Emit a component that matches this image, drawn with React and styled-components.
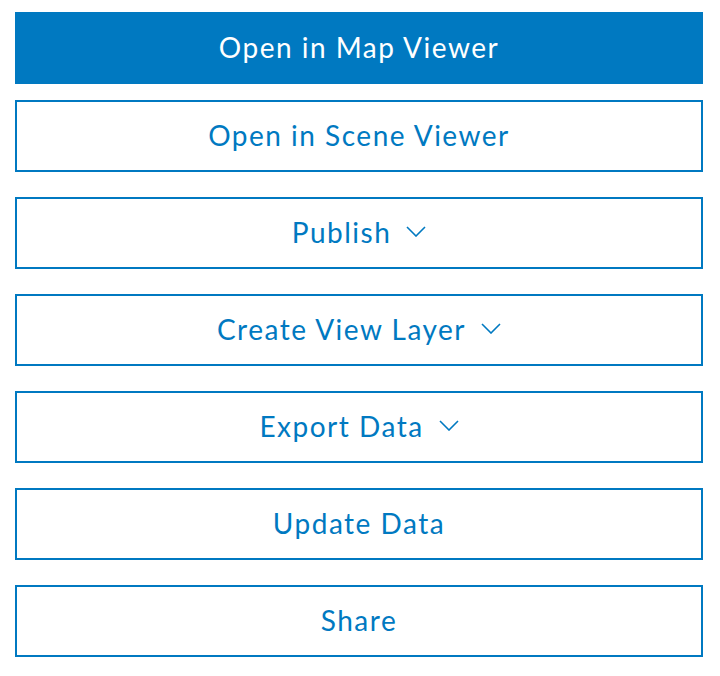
import React from "react";
import styled, { createGlobalStyle } from "styled-components";

const GlobalStyle = createGlobalStyle`
  body {
    margin: 0;
    background: #fff;
    font-family: Lato, "Noto Sans", sans-serif;
  }
`;

const Wrap = styled.div`
  display: flex;
  flex-direction: column;
  padding: 12px 17px 0 15px;
  gap: 25px;
`;

const Group = styled.div`
  display: flex;
  flex-direction: column;
  gap: 16px;
`;

const Btn = styled.button`
  display: flex;
  align-items: center;
  justify-content: center;
  gap: 15px;
  height: 72px;
  width: 100%;
  box-sizing: border-box;
  border: 2px solid #0079c1;
  background: ${(p) => (p.$primary ? "#0079c1" : "#fff")};
  color: ${(p) => (p.$primary ? "#fff" : "#0079c1")};
  font-family: Lato, "Noto Sans", sans-serif;
  font-size: 28px;
  letter-spacing: 1.5px;
  font-weight: 400;
  cursor: pointer;
  padding: 0 0 3px;
`;

const Chevron = () => (
  <svg width="20" height="11" viewBox="0 0 20 11" fill="none">
    <path d="M1 1l9 9 9-9" stroke="#0079c1" strokeWidth="1.6" />
  </svg>
);

const items = [
  { label: "Publish", menu: true },
  { label: "Create View Layer", menu: true },
  { label: "Export Data", menu: true },
  { label: "Update Data" },
  { label: "Share" },
];

export default function App() {
  return (
    <>
      <GlobalStyle />
      <Wrap>
        <Group>
          <Btn $primary>Open in Map Viewer</Btn>
          <Btn>Open in Scene Viewer</Btn>
        </Group>
        {items.map((it) => (
          <Btn key={it.label}>
            {it.label}
            {it.menu && <Chevron />}
          </Btn>
        ))}
      </Wrap>
    </>
  );
}
